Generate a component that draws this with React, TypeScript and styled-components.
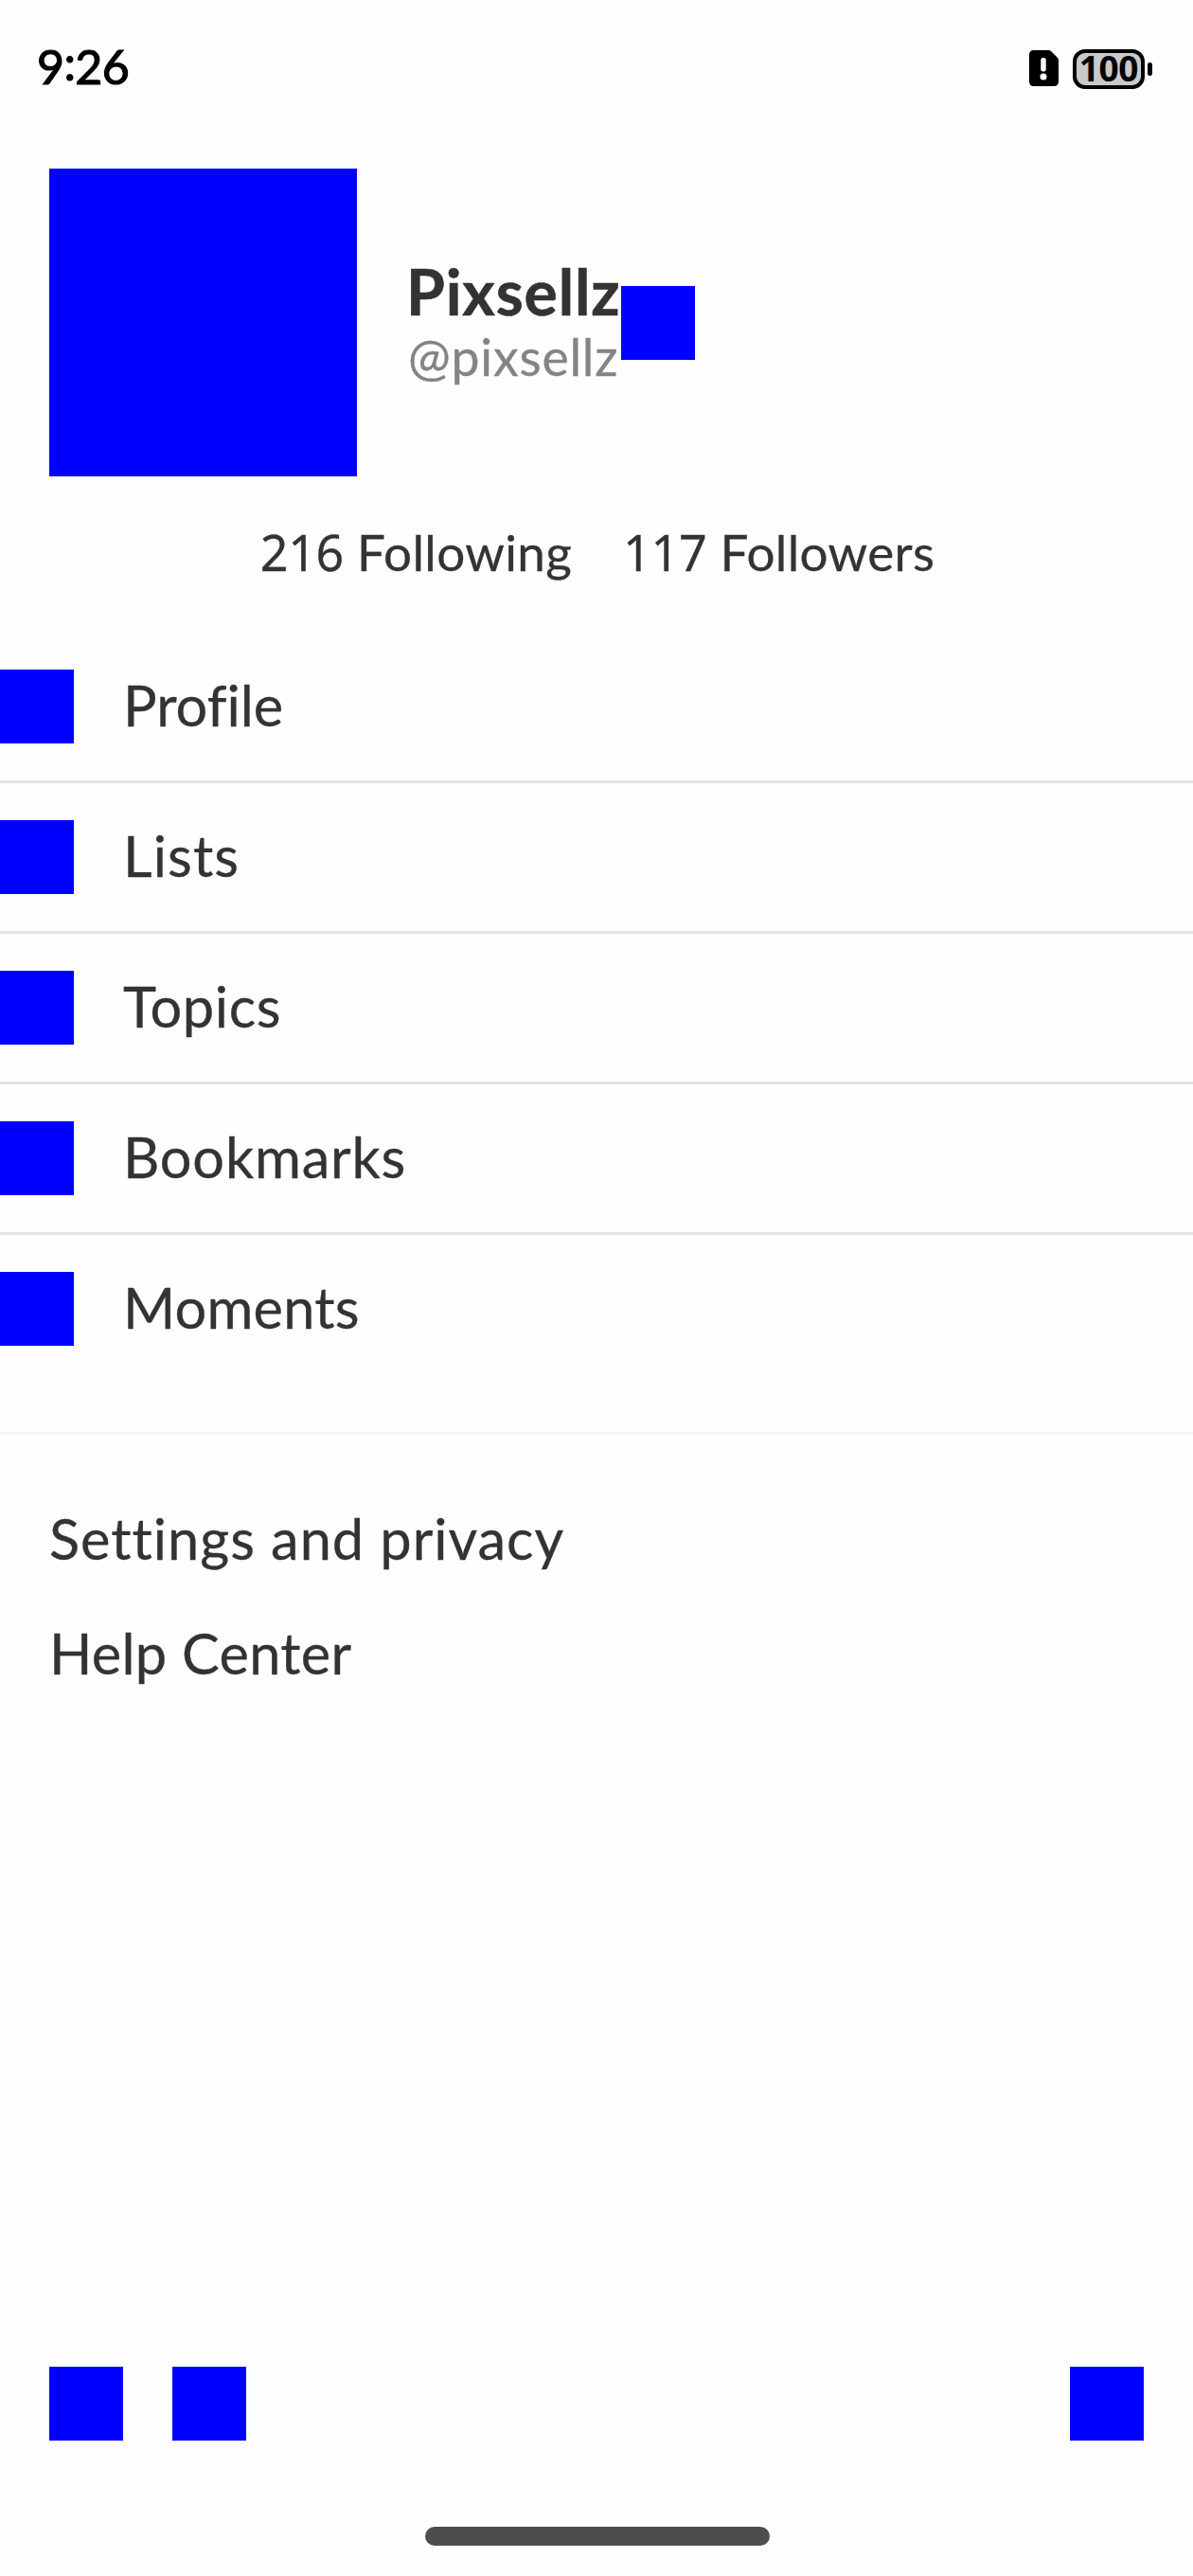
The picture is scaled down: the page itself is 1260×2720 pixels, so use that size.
import React from 'react';
import styled, { createGlobalStyle } from 'styled-components';

const GlobalStyle = createGlobalStyle`
  *, *::before, *::after { box-sizing: border-box; }
  body {
    margin: 0;
    background: #fefefe;
    font-family: Lato, "Noto Sans", sans-serif;
    font-variant-ligatures: none;
    color: #333;
  }
`;

const Screen = styled.div`
  display: flex;
  flex-direction: column;
  width: 1260px;
  height: 2720px;
  overflow: hidden;
  background: #fefefe;
`;

const StatusBar = styled.header`
  display: flex;
  justify-content: space-between;
  align-items: center;
  height: 146px;
  padding: 0 43px 0 39px;
  color: #000;
`;

const Clock = styled.time`
  font-size: 50px;
  line-height: 60px;
  letter-spacing: -0.6px;
  padding-bottom: 6px;
  -webkit-text-stroke: 1.2px #000;
`;

const Colon = styled.span`
  position: relative;
  top: -4px;
`;

const StatusIcons = styled.div`
  display: flex;
  align-items: center;
`;

const SimIcon = styled.svg`
  display: block;
  width: 31px;
  height: 38px;
  margin: 0 15.5px 2px 0;
`;

const Battery = styled.div`
  display: flex;
  align-items: center;
  justify-content: center;
  width: 76px;
  height: 42px;
  padding-bottom: 3px;
  border: 4px solid #000;
  border-radius: 13px;
  background: #c9c9c9;
  font: 700 37px/38px "Noto Sans", sans-serif;
  letter-spacing: -0.4px;
`;

const BatteryTip = styled.span`
  width: 5px;
  height: 14px;
  margin-left: 3px;
  border-radius: 2.5px;
  background: #000;
`;

const Swatch = styled.div<{ $size?: number }>`
  flex: none;
  width: ${p => p.$size ?? 78}px;
  height: ${p => p.$size ?? 78}px;
  background: #00f;
`;

const ProfileHeader = styled.section`
  display: flex;
  align-items: center;
  margin-top: 32px;
  padding-left: 52px;
`;

const Identity = styled.div`
  width: 227px;
  margin-left: 52px;
  padding-bottom: 5px;
  white-space: nowrap;
`;

const Name = styled.h1`
  margin: 0;
  font-size: 66px;
  font-weight: 700;
  line-height: 76px;
  letter-spacing: 0.9px;
  -webkit-text-stroke: 0.6px #333;
`;

const Handle = styled.p`
  margin: 0;
  padding-left: 2px;
  font-size: 53.5px;
  line-height: 61px;
  letter-spacing: 0.8px;
  color: #848484;
  -webkit-text-stroke: 0.3px #848484;
`;

const Stats = styled.section`
  display: flex;
  justify-content: center;
  gap: 54px;
  margin-top: 49px;
  padding-left: 2px;
  font-size: 52px;
  line-height: 61px;
`;

const Stat = styled.div`
  display: flex;
  align-items: baseline;
  gap: 14px;
  height: 61px;
`;

const Count = styled.span`
  font-family: "Noto Sans", sans-serif;
  letter-spacing: -0.3px;
  -webkit-text-stroke: 0.3px #333;
`;

const CountLabel = styled.span`
  font-size: 53px;
  letter-spacing: 0.35px;
  -webkit-text-stroke: 0.3px #333;
`;

const Menu = styled.nav`
  margin-top: 55px;
`;

const MenuRow = styled.div`
  display: flex;
  align-items: center;
  gap: 52px;
  height: 156px;

  & + & {
    height: 159px;
    border-top: 3px solid #e3e3e3;
  }
`;

const Label = styled.span<{ $track: number }>`
  padding-bottom: 4px;
  font-size: 59.5px;
  line-height: 70px;
  letter-spacing: ${p => p.$track}px;
  white-space: nowrap;
  -webkit-text-stroke: 0.3px #333;
`;

const Divider = styled.hr`
  width: 100%;
  height: 3px;
  margin: 52px 0 50px;
  border: 0;
  background: #f5f5f5;
`;

const Links = styled.nav`
  display: flex;
  flex-direction: column;
  padding-left: 52px;
`;

const LinkRow = styled.div`
  display: flex;
  align-items: center;
  height: 121px;
`;

const BottomBar = styled.footer`
  display: flex;
  gap: 52px;
  margin-top: auto;
  padding: 0 52px 91px;

  & > :last-child { margin-left: auto; }
`;

const HomeIndicator = styled.div`
  flex: none;
  width: 364px;
  height: 20px;
  margin: 0 auto 32px;
  border-radius: 10px;
  background: #4d4d4d;
  transform: translateX(1px);
`;

const menu = [
  { label: 'Profile', track: 0 },
  { label: 'Lists', track: 1.1 },
  { label: 'Topics', track: 0.6 },
  { label: 'Bookmarks', track: 0.8 },
  { label: 'Moments', track: 0.2 },
];

const links = [
  { label: 'Settings and privacy', track: 0.97 },
  { label: 'Help Center', track: 0.3 },
];

export default function App() {
  return (
    <Screen>
      <GlobalStyle />
      <StatusBar>
        <Clock>9<Colon>:</Colon>26</Clock>
        <StatusIcons>
          <SimIcon viewBox="0 0 31 38">
            <path d="M5 0H20.5Q22 0 23 1L30 8Q31 9 31 10.5V33Q31 38 26 38H5Q0 38 0 33V5Q0 0 5 0Z" fill="#000" />
            <rect x="12.3" y="8" width="5.4" height="14.5" rx="2.2" fill="#fff" />
            <circle cx="15" cy="28" r="3.5" fill="#fff" />
          </SimIcon>
          <Battery>100</Battery>
          <BatteryTip />
        </StatusIcons>
      </StatusBar>

      <ProfileHeader>
        <Swatch $size={325} />
        <Identity>
          <Name>Pixsellz</Name>
          <Handle>@pixsellz</Handle>
        </Identity>
        <Swatch />
      </ProfileHeader>

      <Stats>
        <Stat><Count>216</Count><CountLabel>Following</CountLabel></Stat>
        <Stat><Count>117</Count><CountLabel>Followers</CountLabel></Stat>
      </Stats>

      <Menu>
        {menu.map(item => (
          <MenuRow key={item.label}>
            <Swatch />
            <Label $track={item.track}>{item.label}</Label>
          </MenuRow>
        ))}
      </Menu>

      <Divider />

      <Links>
        {links.map(item => (
          <LinkRow key={item.label}>
            <Label $track={item.track}>{item.label}</Label>
          </LinkRow>
        ))}
      </Links>

      <BottomBar>
        <Swatch />
        <Swatch />
        <Swatch />
      </BottomBar>
      <HomeIndicator />
    </Screen>
  );
}
